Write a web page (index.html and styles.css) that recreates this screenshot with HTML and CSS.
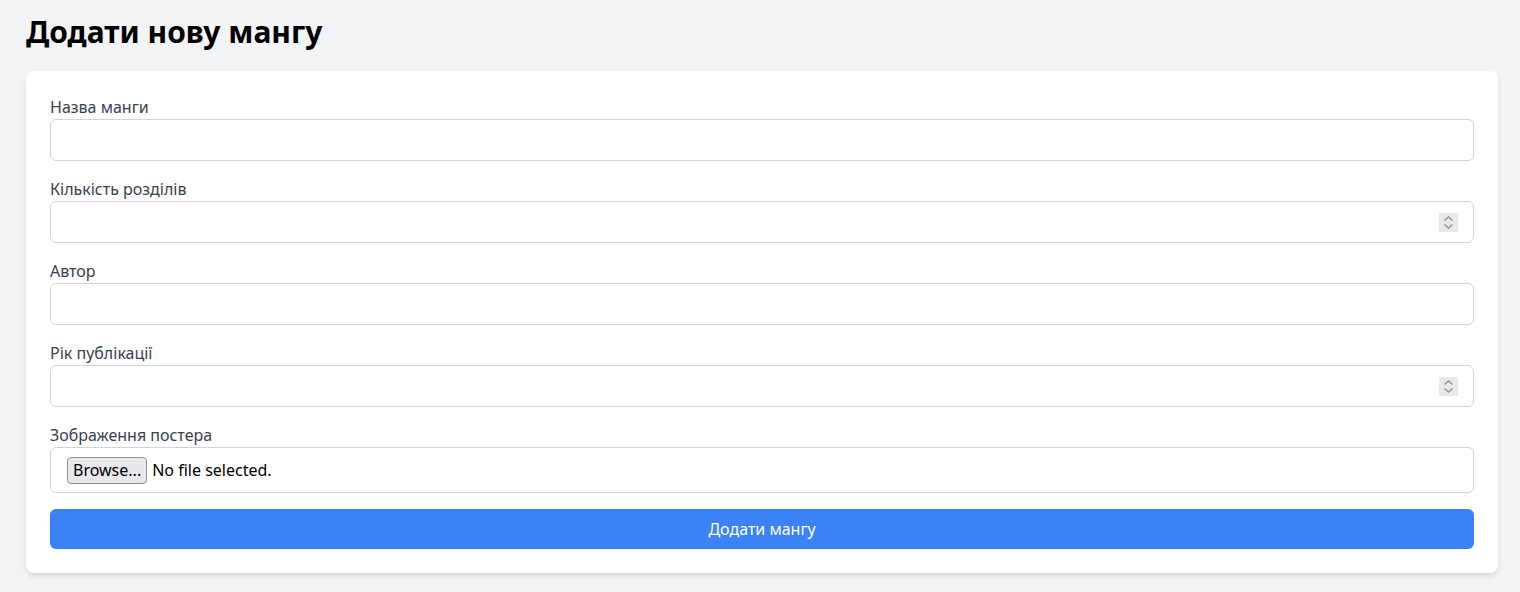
FILE: index.html
```html
<!DOCTYPE html>
<html lang="uk">
<head>
<meta charset="utf-8">
<title>Додати нову мангу</title>
<link rel="stylesheet" href="styles.css">
</head>
<body>
<main class="page">
  <h1 class="title">Додати нову мангу</h1>
  <form class="card">
    <div class="field">
      <label class="label">Назва манги</label>
      <input class="input" type="text">
    </div>
    <div class="field">
      <label class="label">Кількість розділів</label>
      <div class="num-wrap">
        <input class="input" type="text">
        <span class="spinner"><svg width="19" height="19" viewBox="0 0 19 19"><path d="M5.5 7.5 L9.5 4 L13.5 7.5" fill="none" stroke="#8f8f9d" stroke-width="1.4"/><path d="M5.5 11.5 L9.5 15 L13.5 11.5" fill="none" stroke="#8f8f9d" stroke-width="1.4"/></svg></span>
      </div>
    </div>
    <div class="field">
      <label class="label">Автор</label>
      <input class="input" type="text">
    </div>
    <div class="field">
      <label class="label">Рік публікації</label>
      <div class="num-wrap">
        <input class="input" type="text">
        <span class="spinner"><svg width="19" height="19" viewBox="0 0 19 19"><path d="M5.5 7.5 L9.5 4 L13.5 7.5" fill="none" stroke="#8f8f9d" stroke-width="1.4"/><path d="M5.5 11.5 L9.5 15 L13.5 11.5" fill="none" stroke="#8f8f9d" stroke-width="1.4"/></svg></span>
      </div>
    </div>
    <div class="field">
      <label class="label">Зображення постера</label>
      <div class="file">
        <span class="browse">Browse...</span>
        <span class="file-name">No file selected.</span>
      </div>
    </div>
    <button class="submit" type="button">Додати мангу</button>
  </form>
</main>
</body>
</html>
```

FILE: styles.css
```css
* { box-sizing: border-box; }
html, body { margin: 0; padding: 0; }
body {
  background: #f3f4f6;
  font-family: "Noto Sans", "Open Sans", sans-serif;
  color: #111;
}
.page {
  padding: 14px 22px 19px 26px;
}
.title {
  margin: 0 0 21px 0;
  font-size: 30px;
  line-height: 36px;
  font-weight: 700;
  color: #000;
}
.card {
  background: #fff;
  border-radius: 8px;
  box-shadow: 0 4px 6px -1px rgba(0,0,0,0.1), 0 2px 4px -2px rgba(0,0,0,0.1);
  padding: 24px;
  display: flex;
  flex-direction: column;
}
.field {
  display: flex;
  flex-direction: column;
  margin-bottom: 16px;
}
.label {
  font-size: 16px;
  line-height: 24px;
  color: #374151;
}
.input {
  display: block;
  width: 100%;
  height: 42px;
  border: 1px solid #d1d5db;
  border-radius: 6px;
  padding: 8px 12px;
  font: inherit;
  font-size: 16px;
  background: #fff;
  outline: none;
}
.num-wrap { position: relative; }
.spinner {
  position: absolute;
  right: 16px;
  top: 12px;
  width: 19px;
  height: 19px;
  background: #e9e9ed;
  display: block;
}
.spinner svg { display: block; }
.file {
  display: flex;
  align-items: center;
  height: 46px;
  border: 1px solid #d1d5db;
  border-radius: 6px;
  padding: 0 12px 0 16px;
  font-size: 16px;
  color: #000;
}
.browse {
  display: inline-flex;
  align-items: center;
  height: 27px;
  padding: 0 5px;
  background: #e9e9ed;
  border: 1px solid #8f8f9d;
  border-radius: 4px;
  color: #000;
  margin-right: 5px;
}
.file-name { color: #000; }
.submit {
  height: 40px;
  border: 0;
  border-radius: 6px;
  background: #3b82f6;
  color: #fff;
  font: inherit;
  font-size: 16px;
  line-height: 24px;
  cursor: pointer;
}
```
